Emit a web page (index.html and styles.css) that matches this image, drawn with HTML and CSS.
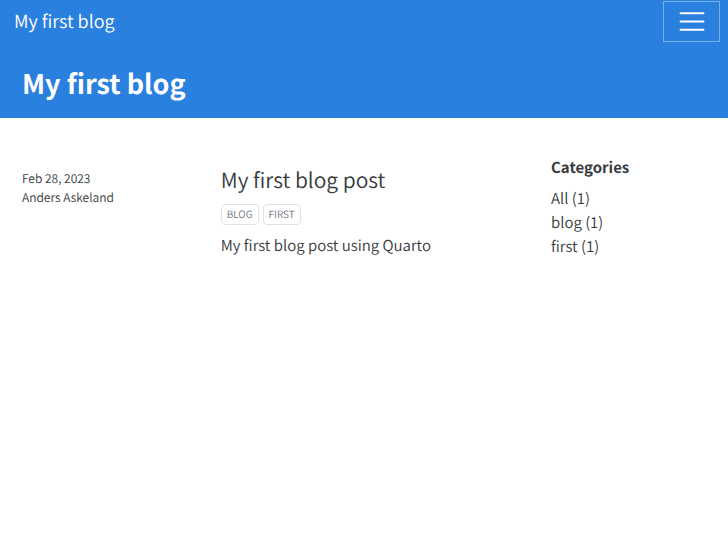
FILE: index.html
```html
<!DOCTYPE html>
<html lang="en">
<head>
<meta charset="utf-8">
<meta name="viewport" content="width=device-width, initial-scale=1">
<title>My first blog</title>
<link rel="stylesheet" href="styles.css">
</head>
<body>
<header class="site-header">
  <nav class="navbar">
    <a class="navbar-brand" href="#">My first blog</a>
    <button class="navbar-toggler" type="button" aria-label="Toggle navigation">
      <svg class="toggler-icon" viewBox="0 0 30 30" aria-hidden="true"><path d="M4.5 7h22M4.5 15h22M4.5 23h22" fill="none" stroke="currentColor" stroke-width="2" stroke-linecap="round" stroke-miterlimit="10"/></svg>
    </button>
  </nav>
  <h1 class="page-title">My first blog</h1>
</header>
<div class="content">
  <main class="listing">
    <article class="post">
      <div class="post-meta">
        <div>Feb 28, 2023</div>
        <div>Anders Askeland</div>
      </div>
      <div class="post-body">
        <h2 class="post-title"><a href="#">My first blog post</a></h2>
        <div class="tags"><span class="tag">BLOG</span><span class="tag">FIRST</span></div>
        <p class="post-summary">My first blog post using Quarto</p>
      </div>
    </article>
  </main>
  <aside class="categories">
    <h2 class="categories-title">Categories</h2>
    <ul class="category-list">
      <li>All (1)</li>
      <li>blog (1)</li>
      <li>first (1)</li>
    </ul>
  </aside>
</div>
</body>
</html>
```
FILE: styles.css
```css
* {
  box-sizing: border-box;
}

body {
  margin: 0;
  background: #fff;
  color: #373a3c;
  font: 350 15px/24px "Noto Sans CJK SC", "Open Sans", sans-serif;
  text-rendering: geometricPrecision;
}

h1,
h2,
p,
ul {
  margin: 0;
  padding: 0;
}

a {
  color: inherit;
  text-decoration: none;
}

.site-header {
  background: #2a80de;
  color: #fff;
}

.navbar {
  display: flex;
  align-items: center;
  justify-content: space-between;
  padding: 1px 8px 0 14px;
}

.navbar-brand {
  padding-bottom: 2px;
  font-size: 18px;
  line-height: 28px;
}

.navbar-toggler {
  display: flex;
  padding: 4px 12px;
  border: 1px solid #75ade9;
  background: transparent;
  color: #fff;
}

.toggler-icon {
  width: 31px;
  height: 31px;
}

.page-title {
  padding: 23px 22px 17px;
  font-size: 27px;
  line-height: 36px;
  font-weight: 700;
}

.content {
  display: grid;
  grid-template-columns: minmax(0, 1fr) 154px;
  column-gap: 24px;
  padding: 38px 23px 0 22px;
}

.post {
  display: grid;
  grid-template-columns: 3fr 5fr;
  column-gap: 15px;
  padding-top: 10px;
}

.post-meta {
  padding-top: 3px;
  font-size: 12px;
  line-height: 19px;
}

.post-title {
  font-size: 21px;
  line-height: 28px;
  font-weight: 350;
}

.tags {
  display: flex;
  gap: 4px;
  padding: 10px 0 9px;
}

.tag {
  padding: 0 5px 2px;
  border: 1px solid #dee2e6;
  border-radius: 4px;
  color: #6c757d;
  font-size: 10px;
  line-height: 17px;
}

.categories-title {
  font-size: 15px;
  line-height: 24px;
  font-weight: 700;
}

.category-list {
  padding-top: 7px;
  list-style: none;
}
```
